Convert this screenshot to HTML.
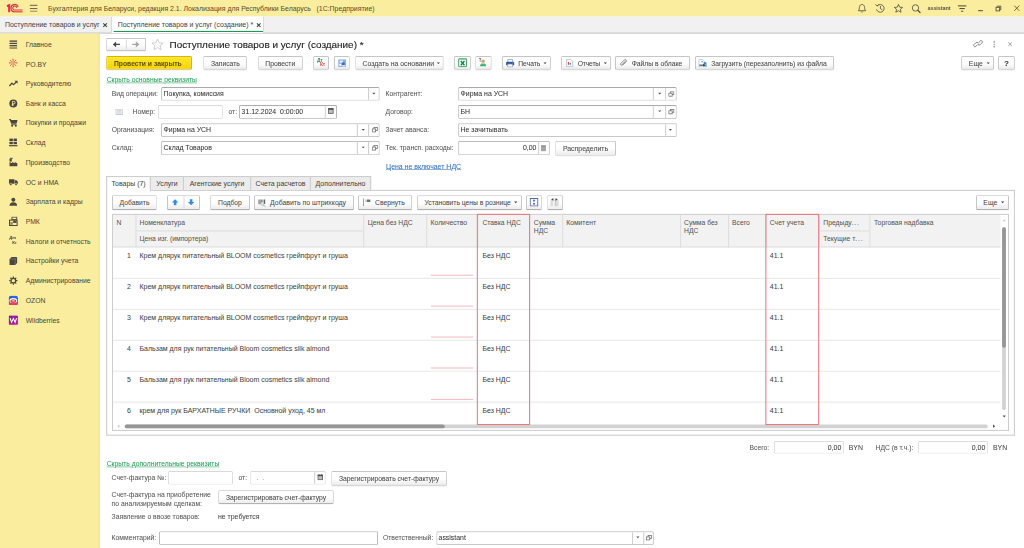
<!DOCTYPE html>
<html><head><meta charset="utf-8"><title>1C</title><style>
*{box-sizing:border-box;margin:0;padding:0}
html,body{width:1920px;height:1027.5px;overflow:hidden;background:#fff}
body{-webkit-text-stroke:0.07px;font-family:"Liberation Sans",sans-serif;font-size:12.99px;color:#3c3c3c;position:relative;line-height:1}
.a{position:absolute;white-space:pre}
.t{position:absolute;white-space:pre;height:18.75px;line-height:18.75px}
.btn{position:absolute;border:2.01px solid #c6c6c6;border-bottom-color:#b2b2b2;border-radius:2.81px;background:linear-gradient(#ffffff 0%,#fdfdfd 55%,#ececec 100%);box-shadow:0 1.12px 0 rgba(0,0,0,.07);white-space:pre;color:#484848;-webkit-text-stroke:0.09px;font-size:12.66px}
.btn span{position:absolute;top:50%;margin-top:-8.25px;height:18.75px;line-height:18.75px}
.fld{position:absolute;border:2.01px solid #9a9a9a;border-color:#a9a9a9 #b9b9b9 #c8c8c8 #b9b9b9;border-radius:2.81px;background:#fff;white-space:pre}
.fld.dim{border-color:#d9d9d9 #dfdfdf #e4e4e4 #dfdfdf}
.fld span{position:absolute;top:50%;margin-top:-9.56px;height:18.75px;line-height:18.75px;color:#333}
.vd{position:absolute;top:0;bottom:0;width:2.01px;background:#d0d0d0}
.lnk{position:absolute;white-space:pre;text-decoration:underline;height:18.75px;line-height:18.75px;font-size:12.71px}
.dd{position:absolute;width:0;height:0;border-left:3.19px solid transparent;border-right:3.19px solid transparent;border-top:3.56px solid #3c3c3c}
html,body{width:1024px !important;height:548px !important}#root{position:absolute;left:0;top:0;width:1920px;height:1028px;transform:scale(0.533333);transform-origin:0 0;overflow:hidden}</style></head><body><div id="root">
<div class="a" style="left:0;top:0;width:1920px;height:30.75px;background:#fbed9e"></div>
<div class="t" style="left:90px;top:7.5px;color:#5a4f2e;">Бухгалтерия для Беларуси, редакция 2.1. Локализация для Республики Беларусь   (1С:Предприятие)</div>
<div class="a" style="left:0;top:30.75px;width:1920px;height:31.88px;background:#f1f1f1;border-bottom:2.01px solid #c8c8c8"></div>
<div class="a" style="left:208.12px;top:30.75px;width:286.88px;height:30.75px;background:#fff;border-left:2.01px solid #dadada;border-right:2.01px solid #dadada"></div>
<div class="a" style="left:212.62px;top:58.12px;width:280.31px;height:2.25px;background:#1a9a50"></div>
<div class="t" style="left:9.38px;top:38.06px;color:#46464f;">Поступление товаров и услуг</div>
<div class="t" style="left:220.69px;top:38.06px;color:#46464f;">Поступление товаров и услуг (создание) *</div>
<div class="a" style="left:0;top:62.62px;width:187.12px;height:965.62px;background:#fbed9e;border-right:2.01px solid #f0e296"></div>
<div class="t" style="left:48.19px;top:74.62px;color:#4d4a3c;font-size:12.75px;">Главное</div>
<div class="t" style="left:48.19px;top:111.56px;color:#4d4a3c;font-size:12.75px;">PO.BY</div>
<div class="t" style="left:48.19px;top:148.5px;color:#4d4a3c;font-size:12.75px;">Руководителю</div>
<div class="t" style="left:48.19px;top:185.44px;color:#4d4a3c;font-size:12.75px;">Банк и касса</div>
<div class="t" style="left:48.19px;top:222.38px;color:#4d4a3c;font-size:12.75px;">Покупки и продажи</div>
<div class="t" style="left:48.19px;top:259.31px;color:#4d4a3c;font-size:12.75px;">Склад</div>
<div class="t" style="left:48.19px;top:296.25px;color:#4d4a3c;font-size:12.75px;">Производство</div>
<div class="t" style="left:48.19px;top:333.19px;color:#4d4a3c;font-size:12.75px;">ОС и НМА</div>
<div class="t" style="left:48.19px;top:370.12px;color:#4d4a3c;font-size:12.75px;">Зарплата и кадры</div>
<div class="t" style="left:48.19px;top:407.06px;color:#4d4a3c;font-size:12.75px;">РМК</div>
<div class="t" style="left:48.19px;top:444px;color:#4d4a3c;font-size:12.75px;">Налоги и отчетность</div>
<div class="t" style="left:48.19px;top:480.94px;color:#4d4a3c;font-size:12.75px;">Настройки учета</div>
<div class="t" style="left:48.19px;top:517.88px;color:#4d4a3c;font-size:12.75px;">Администрирование</div>
<div class="t" style="left:48.19px;top:554.81px;color:#4d4a3c;font-size:12.75px;">OZON</div>
<div class="t" style="left:48.19px;top:591.75px;color:#4d4a3c;font-size:12.75px;">Wildberries</div>
<div class="btn" style="left:198.75px;top:71.25px;width:75px;height:24.38px;"></div>
<div class="a" style="left:236.25px;top:74.06px;width:2.01px;height:18.75px;background:#dcdcdc"></div>
<div class="t" style="left:317.81px;top:69.38px;height:30px;line-height:30px;font-size:18.62px;color:#1c1c1c;-webkit-text-stroke:0.22px">Поступление товаров и услуг (создание) *</div>
<div class="btn" style="left:198.75px;top:105px;width:161.25px;height:26.25px;background:linear-gradient(#ffe72e,#f6d300);border-color:#d4b800;border-bottom-color:#c2a600;"><span style="left:12.94px"><b style="color:#5a5000;-webkit-text-stroke:0">Провести и закрыть</b></span></div>
<div class="btn" style="left:380.62px;top:105px;width:82.5px;height:26.25px;"><span style="left:12.94px">Записать</span></div>
<div class="btn" style="left:483.75px;top:105px;width:84.38px;height:26.25px;"><span style="left:11.81px">Провести</span></div>
<div class="btn" style="left:586.88px;top:105px;width:30px;height:26.25px;"></div>
<div class="btn" style="left:626.25px;top:105px;width:30px;height:26.25px;"></div>
<div class="btn" style="left:665.62px;top:105px;width:166.88px;height:26.25px;"><span style="left:12.19px"><i style="font-style:normal;font-size:12.94px">Создать на основании</i></span></div>
<div class="dd" style="left:818.62px;top:117.19px;border-top-color:#3c3c3c"></div>
<div class="btn" style="left:851.25px;top:105px;width:31.88px;height:26.25px;"></div>
<div class="btn" style="left:890.62px;top:105px;width:31.88px;height:26.25px;"></div>
<div class="btn" style="left:941.25px;top:105px;width:91.88px;height:26.25px;"><span style="left:28.5px">Печать</span></div>
<div class="dd" style="left:1019.25px;top:117.19px;border-top-color:#3c3c3c"></div>
<div class="btn" style="left:1051.88px;top:105px;width:93.75px;height:26.25px;"><span style="left:29.25px"><i style="font-style:normal;letter-spacing:-0.3px">Отчеты</i></span></div>
<div class="dd" style="left:1131.56px;top:117.19px;border-top-color:#3c3c3c"></div>
<div class="btn" style="left:1153.12px;top:105px;width:140.62px;height:26.25px;"><span style="left:29.25px">Файлы в облаке</span></div>
<div class="btn" style="left:1303.12px;top:105px;width:260.62px;height:26.25px;"><span style="left:28.31px">Загрузить (перезаполнить) из файла</span></div>
<div class="btn" style="left:1801.88px;top:105px;width:61.88px;height:26.25px;"><span style="left:12.75px"><i style="font-style:normal;font-size:12.94px">Еще</i></span></div>
<div class="dd" style="left:1850.06px;top:117.19px;border-top-color:#3c3c3c"></div>
<div class="btn" style="left:1871.25px;top:105px;width:31.88px;height:26.25px;"><span style="left:0;right:0;text-align:center"><b style="font-size:15px;color:#333">?</b></span></div>
<div class="lnk" style="left:200.06px;top:141px;color:#1f9d55">Скрыть основные реквизиты</div>
<div class="t" style="left:209.44px;top:167.44px;color:#555;font-size:12.71px;">Вид операции:</div>
<div class="fld" style="left:301.88px;top:163.12px;width:410.62px;height:26.25px;"><span style="left:2.81px">Покупка, комиссия</span><i class="vd" style="left:386.12px"></i></div>
<div class="dd" style="left:698.25px;top:173.62px;border-left-width:3px;border-right-width:3px;border-top-width:3.56px;border-top-color:#505050"></div>
<div class="t" style="left:248.44px;top:201.38px;color:#555;font-size:12.71px;">Номер:</div>
<div class="fld dim" style="left:296.25px;top:196.88px;width:121.88px;height:26.25px;"></div>
<div class="t" style="left:428.44px;top:201.38px;color:#555;font-size:12.71px;">от:</div>
<div class="fld" style="left:448.12px;top:196.88px;width:183.75px;height:26.25px;"><span style="left:2.81px">31.12.2024  0:00:00</span><i class="vd" style="left:159.24px"></i></div>
<div class="t" style="left:209.44px;top:235.31px;color:#555;font-size:12.71px;">Организация:</div>
<div class="fld" style="left:301.88px;top:230.62px;width:410.62px;height:26.25px;"><span style="left:2.81px">Фирма на УСН</span><i class="vd" style="left:365.49px"></i><i class="vd" style="left:386.12px"></i></div>
<div class="dd" style="left:678.19px;top:241.5px;border-left-width:3px;border-right-width:3px;border-top-width:3.56px;border-top-color:#505050"></div>
<div class="t" style="left:209.44px;top:269.06px;color:#555;font-size:12.71px;">Склад:</div>
<div class="fld" style="left:301.88px;top:264.38px;width:410.62px;height:26.25px;"><span style="left:2.81px">Склад Товаров</span><i class="vd" style="left:365.49px"></i><i class="vd" style="left:386.12px"></i></div>
<div class="dd" style="left:678.19px;top:275.25px;border-left-width:3px;border-right-width:3px;border-top-width:3.56px;border-top-color:#505050"></div>
<div class="t" style="left:722.81px;top:167.44px;color:#555;font-size:12.71px;">Контрагент:</div>
<div class="fld" style="left:858.75px;top:163.12px;width:410.62px;height:26.25px;"><span style="left:2.81px">Фирма на УСН</span><i class="vd" style="left:363.62px"></i><i class="vd" style="left:386.12px"></i></div>
<div class="dd" style="left:1233.75px;top:173.62px;border-left-width:3px;border-right-width:3px;border-top-width:3.56px;border-top-color:#505050"></div>
<div class="t" style="left:722.81px;top:201.38px;color:#555;font-size:12.71px;">Договор:</div>
<div class="fld" style="left:858.75px;top:196.88px;width:410.62px;height:26.25px;"><span style="left:2.81px">БН</span><i class="vd" style="left:363.62px"></i><i class="vd" style="left:386.12px"></i></div>
<div class="dd" style="left:1233.75px;top:207.38px;border-left-width:3px;border-right-width:3px;border-top-width:3.56px;border-top-color:#505050"></div>
<div class="t" style="left:722.81px;top:235.31px;color:#555;font-size:12.71px;">Зачет аванса:</div>
<div class="fld" style="left:858.75px;top:230.62px;width:410.62px;height:26.25px;"><span style="left:2.81px">Не зачитывать</span><i class="vd" style="left:386.12px"></i></div>
<div class="dd" style="left:1254.38px;top:241.5px;border-left-width:3px;border-right-width:3px;border-top-width:3.56px;border-top-color:#505050"></div>
<div class="t" style="left:722.81px;top:269.06px;color:#555;font-size:12.71px;">Тек. трансп. расходы:</div>
<div class="fld" style="left:858.75px;top:264.38px;width:172.5px;height:26.25px;"><span style="right:23.44px">0,00</span><i class="vd" style="left:147.99px"></i></div>
<div class="btn" style="left:1040.62px;top:264.38px;width:114.38px;height:28.12px;"><span style="left:0;right:0;text-align:center"><i style="font-style:normal;font-size:12.94px">Распределить</i></span></div>
<div class="lnk" style="left:723.75px;top:303px;color:#2e6fc0;font-size:13.03px">Цена не включает НДС</div>
<div class="a" style="left:198.75px;top:356.25px;width:1704.38px;height:460.31px;border:2.01px solid #cdcdcd;background:#fff"></div>
<div class="a" style="left:198.75px;top:330px;width:84.38px;height:28.5px;border:2.01px solid #cdcdcd;border-bottom:none;background:#fff;text-align:center;line-height:23.62px;color:#444">Товары (7)</div>
<div class="a" style="left:281.25px;top:330px;width:63.75px;height:26.25px;border:2.01px solid #cdcdcd;border-bottom:none;background:#ececec;text-align:center;line-height:23.62px;color:#444">Услуги</div>
<div class="a" style="left:343.12px;top:330px;width:127.5px;height:26.25px;border:2.01px solid #cdcdcd;border-bottom:none;background:#ececec;text-align:center;line-height:23.62px;color:#444">Агентские услуги</div>
<div class="a" style="left:468.75px;top:330px;width:114.38px;height:26.25px;border:2.01px solid #cdcdcd;border-bottom:none;background:#ececec;text-align:center;line-height:23.62px;color:#444">Счета расчетов</div>
<div class="a" style="left:581.25px;top:330px;width:114.38px;height:26.25px;border:2.01px solid #cdcdcd;border-bottom:none;background:#ececec;text-align:center;line-height:23.62px;color:#444">Дополнительно</div>
<div class="btn" style="left:210px;top:365.62px;width:84.38px;height:28.12px;"><span style="left:0;right:0;text-align:center">Добавить</span></div>
<div class="btn" style="left:313.12px;top:365.62px;width:61.88px;height:28.12px;"></div>
<div class="a" style="left:343.69px;top:368.06px;width:2.01px;height:22.5px;background:#dcdcdc"></div>
<div class="btn" style="left:393.75px;top:365.62px;width:75px;height:28.12px;"><span style="left:0;right:0;text-align:center">Подбор</span></div>
<div class="btn" style="left:476.25px;top:365.62px;width:187.5px;height:28.12px;"><span style="left:28.12px"><i style="font-style:normal;font-size:12.94px">Добавить по штрихкоду</i></span></div>
<div class="btn" style="left:671.25px;top:365.62px;width:101.25px;height:28.12px;"><span style="left:30px">Свернуть</span></div>
<div class="btn" style="left:781.88px;top:365.62px;width:196.88px;height:28.12px;"><span style="left:12px">Установить цены в рознице</span></div>
<div class="dd" style="left:963.94px;top:377.62px;border-top-color:#3c3c3c"></div>
<div class="btn" style="left:986.25px;top:365.62px;width:30px;height:28.12px;"></div>
<div class="btn" style="left:1025.62px;top:365.62px;width:30px;height:28.12px;"></div>
<div class="btn" style="left:1830px;top:365.62px;width:61.88px;height:28.12px;"><span style="left:11.81px"><i style="font-style:normal;font-size:12.94px">Еще</i></span></div>
<div class="dd" style="left:1877.44px;top:377.62px;border-top-color:#3c3c3c"></div>
<div class="a" style="left:210px;top:401.25px;width:1681.88px;height:406.88px;border:2.01px solid #cdcdcd;background:#fff"></div>
<div class="a" style="left:211.88px;top:403.12px;width:1664.06px;height:60.56px;background:#f2f2f2;border-bottom:2.01px solid #dedede"></div>
<div class="a" style="left:253.5px;top:403.12px;width:2.01px;height:60.56px;background:#dedede"></div>
<div class="a" style="left:681px;top:403.12px;width:2.01px;height:60.56px;background:#dedede"></div>
<div class="a" style="left:799.12px;top:403.12px;width:2.01px;height:60.56px;background:#dedede"></div>
<div class="a" style="left:894.75px;top:403.12px;width:2.01px;height:60.56px;background:#dedede"></div>
<div class="a" style="left:992.25px;top:403.12px;width:2.01px;height:60.56px;background:#dedede"></div>
<div class="a" style="left:1054.12px;top:403.12px;width:2.01px;height:60.56px;background:#dedede"></div>
<div class="a" style="left:1275px;top:403.12px;width:2.01px;height:60.56px;background:#dedede"></div>
<div class="a" style="left:1365px;top:403.12px;width:2.01px;height:60.56px;background:#dedede"></div>
<div class="a" style="left:1435.5px;top:403.12px;width:2.01px;height:60.56px;background:#dedede"></div>
<div class="a" style="left:1535.25px;top:403.12px;width:2.01px;height:60.56px;background:#dedede"></div>
<div class="a" style="left:1630.31px;top:403.12px;width:2.01px;height:60.56px;background:#dedede"></div>
<div class="a" style="left:253.5px;top:431.81px;width:427.5px;height:2.01px;background:#dedede"></div>
<div class="a" style="left:1535.25px;top:431.81px;width:95.06px;height:2.01px;background:#dedede"></div>
<div class="t" style="left:218.62px;top:408.75px;color:#555;font-size:12.71px;">N</div>
<div class="t" style="left:261.56px;top:408.75px;color:#555;font-size:12.71px;">Номенклатура</div>
<div class="t" style="left:261.56px;top:439.12px;color:#555;font-size:12.71px;">Цена изг. (импортера)</div>
<div class="t" style="left:689.44px;top:408.75px;color:#555;font-size:12.71px;">Цена без НДС</div>
<div class="t" style="left:807.38px;top:408.75px;color:#555;font-size:12.71px;">Количество</div>
<div class="t" style="left:904.5px;top:408.75px;color:#555;font-size:12.71px;">Ставка НДС</div>
<div class="t" style="left:1000.87px;top:408.75px;color:#555;font-size:12.71px;">Сумма</div>
<div class="t" style="left:1000.87px;top:423.38px;color:#555;font-size:12.71px;">НДС</div>
<div class="t" style="left:1061.62px;top:408.75px;color:#555;font-size:12.71px;">Комитент</div>
<div class="t" style="left:1282.5px;top:408.75px;color:#555;font-size:12.71px;">Сумма без</div>
<div class="t" style="left:1282.5px;top:423.38px;color:#555;font-size:12.71px;">НДС</div>
<div class="t" style="left:1372.5px;top:408.75px;color:#555;font-size:12.71px;">Всего</div>
<div class="t" style="left:1443.38px;top:408.75px;color:#555;font-size:12.71px;">Счет учета</div>
<div class="t" style="left:1543.69px;top:408.75px;color:#555;font-size:12.71px;">Предыду<span style="letter-spacing:1.41px">...</span></div>
<div class="t" style="left:1543.69px;top:439.12px;color:#555;font-size:12.71px;">Текущие т<span style="letter-spacing:1.41px">...</span></div>
<div class="t" style="left:1638.75px;top:408.75px;color:#555;font-size:12.71px;">Торговая надбавка</div>
<div class="t" style="left:212.81px;width:32.81px;text-align:right;top:471px;color:#444">1</div>
<div class="t" style="left:261.56px;top:470.62px;color:#444;font-size:13.12px;">Крем длярук питательный BLOOM cosmetics грейпфрут и груша</div>
<div class="t" style="left:904.5px;top:470.62px;color:#404040;">Без НДС</div>
<div class="t" style="left:1443.38px;top:470.62px;color:#404040;">41.1</div>
<div class="a" style="left:211.88px;top:520.88px;width:1664.06px;height:2.01px;background:#e9e9e9"></div>
<div class="a" style="left:808.12px;top:515.06px;width:78.75px;height:0;border-top:2.01px solid #f7bcc0"></div>
<div class="t" style="left:212.81px;width:32.81px;text-align:right;top:529.12px;color:#444">2</div>
<div class="t" style="left:261.56px;top:528.75px;color:#444;font-size:13.12px;">Крем длярук питательный BLOOM cosmetics грейпфрут и груша</div>
<div class="t" style="left:904.5px;top:528.75px;color:#404040;">Без НДС</div>
<div class="t" style="left:1443.38px;top:528.75px;color:#404040;">41.1</div>
<div class="a" style="left:211.88px;top:579px;width:1664.06px;height:2.01px;background:#e9e9e9"></div>
<div class="a" style="left:808.12px;top:573.19px;width:78.75px;height:0;border-top:2.01px solid #f7bcc0"></div>
<div class="t" style="left:212.81px;width:32.81px;text-align:right;top:587.25px;color:#444">3</div>
<div class="t" style="left:261.56px;top:586.88px;color:#444;font-size:13.12px;">Крем длярук питательный BLOOM cosmetics грейпфрут и груша</div>
<div class="t" style="left:904.5px;top:586.88px;color:#404040;">Без НДС</div>
<div class="t" style="left:1443.38px;top:586.88px;color:#404040;">41.1</div>
<div class="a" style="left:211.88px;top:637.12px;width:1664.06px;height:2.01px;background:#e9e9e9"></div>
<div class="a" style="left:808.12px;top:631.31px;width:78.75px;height:0;border-top:2.01px solid #f7bcc0"></div>
<div class="t" style="left:212.81px;width:32.81px;text-align:right;top:645.38px;color:#444">4</div>
<div class="t" style="left:261.56px;top:645px;color:#444;font-size:13.12px;">Бальзам для рук питательный Bloom cosmetics silk almond</div>
<div class="t" style="left:904.5px;top:645px;color:#404040;">Без НДС</div>
<div class="t" style="left:1443.38px;top:645px;color:#404040;">41.1</div>
<div class="a" style="left:211.88px;top:695.25px;width:1664.06px;height:2.01px;background:#e9e9e9"></div>
<div class="a" style="left:808.12px;top:689.44px;width:78.75px;height:0;border-top:2.01px solid #f7bcc0"></div>
<div class="t" style="left:212.81px;width:32.81px;text-align:right;top:703.5px;color:#444">5</div>
<div class="t" style="left:261.56px;top:703.12px;color:#444;font-size:13.12px;">Бальзам для рук питательный Bloom cosmetics silk almond</div>
<div class="t" style="left:904.5px;top:703.12px;color:#404040;">Без НДС</div>
<div class="t" style="left:1443.38px;top:703.12px;color:#404040;">41.1</div>
<div class="a" style="left:211.88px;top:753.38px;width:1664.06px;height:2.01px;background:#e9e9e9"></div>
<div class="a" style="left:808.12px;top:747.56px;width:78.75px;height:0;border-top:2.01px solid #f7bcc0"></div>
<div class="t" style="left:212.81px;width:32.81px;text-align:right;top:761.62px;color:#444">6</div>
<div class="t" style="left:261.56px;top:761.25px;color:#444;font-size:13.12px;">крем для рук БАРХАТНЫЕ РУЧКИ  Основной уход, 45 мл</div>
<div class="t" style="left:904.5px;top:761.25px;color:#404040;">Без НДС</div>
<div class="t" style="left:1443.38px;top:761.25px;color:#404040;">41.1</div>
<div class="a" style="left:1879.12px;top:425.62px;width:6.75px;height:343.12px;background:#d2d2d2;border-radius:3.38px"></div>
<div class="a" style="left:1879.12px;top:425.62px;width:6.75px;height:226.88px;background:#969696;border-radius:3.38px"></div>
<div class="a" style="left:234.38px;top:795.75px;width:1618.12px;height:7.12px;background:#d2d2d2;border-radius:3.56px"></div>
<div class="a" style="left:234.38px;top:795.75px;width:600px;height:7.12px;background:#969696;border-radius:3.56px"></div>
<div class="a" style="left:1879.5px;top:411.19px;width:0;height:0;border-left:3.19px solid transparent;border-right:3.19px solid transparent;border-bottom:4.12px solid #c4c4c4"></div>
<div class="a" style="left:1879.5px;top:779.06px;width:0;height:0;border-left:3.19px solid transparent;border-right:3.19px solid transparent;border-top:4.12px solid #4a4a4a"></div>
<div class="a" style="left:219.75px;top:796.12px;width:0;height:0;border-top:3.19px solid transparent;border-bottom:3.19px solid transparent;border-right:4.12px solid #c4c4c4"></div>
<div class="a" style="left:1862.44px;top:796.12px;width:0;height:0;border-top:3.19px solid transparent;border-bottom:3.19px solid transparent;border-left:4.12px solid #4a4a4a"></div>
<div class="a" style="left:894.38px;top:401.25px;width:99.38px;height:395.62px;border:2.01px solid #ea7a82"></div>
<div class="a" style="left:1434.75px;top:401.25px;width:101.25px;height:395.62px;border:2.01px solid #ea7a82"></div>
<div class="t" style="left:1405.31px;top:830.25px;color:#555;font-size:12.71px;">Всего:</div>
<div class="fld dim" style="left:1451.25px;top:826.88px;width:131.25px;height:24.38px;"><span style="right:3.19px">0,00</span></div>
<div class="t" style="left:1591.31px;top:830.25px;color:#444;">BYN</div>
<div class="t" style="left:1641.56px;top:830.25px;color:#555;font-size:12.71px;">НДС (в т.ч.):</div>
<div class="fld dim" style="left:1721.25px;top:826.88px;width:131.25px;height:24.38px;"><span style="right:3.19px">0,00</span></div>
<div class="t" style="left:1861.88px;top:830.25px;color:#444;">BYN</div>
<div class="lnk" style="left:200.06px;top:860.62px;color:#1f9d55">Скрыть дополнительные реквизиты</div>
<div class="t" style="left:209.25px;top:886.88px;color:#555;font-size:12.71px;">Счет-фактура №:</div>
<div class="fld dim" style="left:315px;top:883.12px;width:121.88px;height:26.25px;"></div>
<div class="t" style="left:447.19px;top:886.88px;color:#555;font-size:12.71px;">от:</div>
<div class="fld dim" style="left:468.75px;top:883.12px;width:142.5px;height:26.25px;"><span style="left:2.81px"><span style="color:#888;position:static">  .  .</span></span><i class="vd" style="left:117.99px"></i></div>
<div class="btn" style="left:620.62px;top:883.12px;width:217.5px;height:28.12px;"><span style="left:0;right:0;text-align:center">Зарегистрировать счет-фактуру</span></div>
<div class="t" style="left:209.25px;top:918.75px;color:#555;font-size:12.71px;">Счет-фактура на приобретение</div>
<div class="t" style="left:209.25px;top:934.5px;color:#555;font-size:12.71px;">по анализируемым сделкам:</div>
<div class="btn" style="left:408.75px;top:918.75px;width:217.5px;height:26.25px;"><span style="left:0;right:0;text-align:center">Зарегистрировать счет-фактуру</span></div>
<div class="t" style="left:209.25px;top:960.75px;color:#555;font-size:12.71px;">Заявление о ввозе товаров:</div>
<div class="t" style="left:408.75px;top:960.75px;color:#444;">не требуется</div>
<div class="t" style="left:209.25px;top:999.75px;color:#555;font-size:12.71px;">Комментарий:</div>
<div class="fld" style="left:298.12px;top:995.62px;width:410.62px;height:26.25px;"></div>
<div class="t" style="left:718.12px;top:999.75px;color:#555;font-size:12.71px;">Ответственный:</div>
<div class="fld" style="left:817.5px;top:995.62px;width:408.75px;height:26.25px;"><span style="left:2.81px">assistant</span><i class="vd" style="left:365.49px"></i><i class="vd" style="left:386.12px"></i></div>
<div class="dd" style="left:1193.25px;top:1005.94px;border-left-width:3px;border-right-width:3px;border-top-width:3.56px;border-top-color:#505050"></div>
<svg class="a" style="left:11.25px;top:5.62px" width="33.75" height="18.75" viewBox="0 0 18 10">
<g fill="none" stroke="#dc3545" stroke-linecap="butt">
<path d="M1.1 3 L3.3 2 L3.3 9" stroke-width="2.1" stroke-linejoin="miter"/>
<path d="M12.3 3.6 A3.7 3.7 0 1 0 9.2 8.6 L16.7 8.6" stroke-width="1.25"/>
<path d="M10.9 4.6 A2 2 0 1 0 9.2 6.8 L16.7 6.8" stroke-width="1.15"/>
</g></svg>
<div class="a" style="left:56.25px;top:9.38px;width:13.88px;height:2.01px;background:#73684a"></div>
<div class="a" style="left:56.25px;top:15px;width:13.88px;height:2.01px;background:#73684a"></div>
<div class="a" style="left:56.25px;top:19.88px;width:13.88px;height:2.25px;background:#9a8f63"></div>
<svg class="a" style="left:1605px;top:3.75px" width="22.50" height="24.38" viewBox="0 0 12 13"><g fill="none" stroke="#585240" stroke-width="0.85" stroke-linejoin="round"><path d="M2.3 8.6 C3.6 7.6 3.2 5.8 3.5 4.6 C3.9 3 5 2.3 6 2.3 C7 2.3 8.1 3 8.5 4.6 C8.8 5.8 8.4 7.6 9.7 8.6 Z"/><path d="M5.2 9.6 A0.9 0.9 0 0 0 6.8 9.6"/></g></svg>
<svg class="a" style="left:1638.75px;top:3.75px" width="24.38" height="24.38" viewBox="0 0 13 13"><g fill="none" stroke="#585240" stroke-width="0.85" stroke-linecap="round"><path d="M3.2 3.6 A3.9 3.9 0 1 1 2.4 7.6"/><path d="M6.3 4.3 L6.3 6.5 L7.9 7.5"/><path d="M1.6 2.6 L3.1 3.9 L4.4 2.5" stroke-linejoin="round"/></g></svg>
<svg class="a" style="left:1672.5px;top:3.75px" width="24.38" height="24.38" viewBox="0 0 13 13"><path d="M6.2 2.3 L7.4 5 L10.3 5.3 L8.1 7.2 L8.8 10.1 L6.2 8.6 L3.6 10.1 L4.3 7.2 L2.1 5.3 L5 5 Z" fill="none" stroke="#585240" stroke-width="0.85" stroke-linejoin="round"/></svg>
<svg class="a" style="left:1706.25px;top:3.75px" width="24.38" height="24.38" viewBox="0 0 13 13"><g fill="none" stroke="#585240"><circle cx="5.6" cy="5.8" r="3.2" stroke-width="0.85"/><path d="M7.9 8.2 L10.2 10.4" stroke-width="1.3" stroke-linecap="round"/></g></svg>
<div class="t" style="left:1739.06px;top:6.19px;font-size:10.31px;font-weight:bold;color:#5a5442;letter-spacing:-0.19px;-webkit-text-stroke:0">assistant</div>
<div class="a" style="left:1796.25px;top:10.12px;width:15.56px;height:2.01px;background:#585240"></div>
<div class="a" style="left:1799.25px;top:15.37px;width:9.56px;height:2.01px;background:#585240"></div>
<div class="a" style="left:1802.25px;top:20.25px;width:3.56px;height:2.06px;background:#585240"></div>
<div class="a" style="left:1833.75px;top:18.75px;width:9.38px;height:2.01px;background:#585240"></div>
<svg class="a" style="left:1863.75px;top:7.5px" width="16.88" height="16.88" viewBox="0 0 9 9"><g fill="none" stroke="#585240" stroke-width="0.9"><rect x="1.9" y="3" width="3.6" height="3.6"/><path d="M3.2 3 L3.2 1.9 L6.7 1.9 L6.7 5.4 L5.5 5.4"/></g></svg>
<svg class="a" style="left:1897.5px;top:5.62px" width="16.88" height="18.75" viewBox="0 0 9 10"><path d="M2 2.4 L7 7.6 M7 2.4 L2 7.6" stroke="#585240" stroke-width="0.85" fill="none"/></svg>
<svg class="a" style="left:191.81px;top:41.81px" width="11.25" height="11.25" viewBox="0 0 6 6"><path d="M0.9 0.9 L4.5 4.5 M4.5 0.9 L0.9 4.5" stroke="#404040" stroke-width="1.05" fill="none"/></svg>
<svg class="a" style="left:479.62px;top:41.81px" width="11.25" height="11.25" viewBox="0 0 6 6"><path d="M0.9 0.9 L4.5 4.5 M4.5 0.9 L0.9 4.5" stroke="#404040" stroke-width="1.05" fill="none"/></svg>
<svg class="a" style="left:208.12px;top:75px" width="22.50" height="16.88" viewBox="0 0 12 9"><path d="M9 4.4 L3 4.4" stroke="#454545" stroke-width="1.3" fill="none"/><path d="M1.9 4.4 L5.2 1.5 L5.2 7.3 Z" fill="#454545"/></svg>
<svg class="a" style="left:243.75px;top:75px" width="22.50" height="16.88" viewBox="0 0 12 9"><path d="M2 4.4 L8.4 4.4" stroke="#a6a6a6" stroke-width="1.3" fill="none"/><path d="M9.2 4.4 L5.7 1.3 L5.7 7.5 Z" fill="#a6a6a6"/></svg>
<svg class="a" style="left:283.12px;top:71.25px" width="26.25" height="24.38" viewBox="0 0 14 13"><path d="M6.6 1.2 L8.2 4.9 L12.2 5.3 L9.2 7.9 L10.1 11.8 L6.6 9.7 L3.1 11.8 L4 7.9 L1 5.3 L5 4.9 Z" fill="#fff" stroke="#c4c4c4" stroke-width="0.8" stroke-linejoin="round"/></svg>
<svg class="a" style="left:1824.38px;top:73.12px" width="20.62" height="18.75" viewBox="0 0 11 10"><g fill="none" stroke="#7c7c7c" stroke-width="0.95" stroke-linecap="round"><path d="M4.6 5.9 L2.9 7.6 A1.3 1.3 0 0 1 1.1 5.8 L3.2 3.7 A1.3 1.3 0 0 1 5.1 3.8"/><path d="M5.9 3.6 L7.6 1.9 A1.3 1.3 0 0 1 9.4 3.7 L7.3 5.8 A1.3 1.3 0 0 1 5.4 5.7"/></g></svg>
<div class="a" style="left:1862.81px;top:77.25px;width:2.25px;height:2.25px;background:#777"></div>
<div class="a" style="left:1862.81px;top:81.75px;width:2.25px;height:2.25px;background:#777"></div>
<div class="a" style="left:1862.81px;top:86.25px;width:2.25px;height:2.25px;background:#777"></div>
<svg class="a" style="left:1888.12px;top:76.88px" width="13.12" height="13.12" viewBox="0 0 7 7"><path d="M1.3 1.3 L5 5 M5 1.3 L1.3 5" stroke="#8a8a8a" stroke-width="0.8" fill="none"/></svg>
<div class="a" style="left:594.38px;top:109.69px;font-size:9.38px;font-weight:bold;color:#2e9e5b;letter-spacing:-0.38px;line-height:9.38px">Дт</div>
<div class="a" style="left:600px;top:117.38px;font-size:9.38px;font-weight:bold;color:#e8505b;letter-spacing:-0.38px;line-height:9.38px">Кт</div>
<svg class="a" style="left:633.75px;top:110.62px" width="15.00" height="15.00" viewBox="0 0 8 8"><rect x="0" y="0" width="8" height="7.8" fill="#8fb0e3"/><rect x="1.6" y="1.4" width="3.2" height="2.2" fill="#e9f0fb"/><rect x="3.6" y="3.2" width="3" height="2.6" fill="#3f6fc4"/><rect x="1.2" y="4.6" width="2" height="2.2" fill="#fff"/><rect x="4.2" y="6" width="3" height="1.2" fill="#e9f0fb"/></svg>
<svg class="a" style="left:858.75px;top:108.75px" width="16.88" height="17.25" viewBox="0 0 9 9.2"><rect x="0.5" y="0.6" width="8" height="8" rx="0.6" fill="#f3fbf5" stroke="#2f9e5b" stroke-width="1"/><rect x="0" y="0.2" width="9" height="1.2" fill="#5cb77e"/><path d="M2.7 2.9 L6.3 7.1 M6.3 2.9 L2.7 7.1" stroke="#1f7d44" stroke-width="1.3"/></svg>
<svg class="a" style="left:896.25px;top:107.81px" width="18.75" height="18.75" viewBox="0 0 10 10"><circle cx="5.2" cy="3.6" r="1.7" fill="#d9a56c"/><path d="M3.4 3 Q5.2 0.8 7 3 L6.8 2.4 Q5.2 1.2 3.6 2.4 Z" fill="#6b4a2a"/><path d="M2.2 8.6 Q2.2 5.6 5.2 5.6 Q8.2 5.6 8.2 8.6 Z" fill="#3bb273"/><path d="M4.5 5.7 L5.2 7.2 L5.9 5.7 Z" fill="#fff"/><path d="M1.2 1.6 Q1.2 0.6 2.1 0.6 Q3 0.6 3 1.4 Q3 2 2.2 2.4 L2.2 3" stroke="#444" stroke-width="0.7" fill="none"/><rect x="1.9" y="3.6" width="0.7" height="0.7" fill="#444"/></svg>
<svg class="a" style="left:947.81px;top:109.69px" width="17.81" height="16.88" viewBox="0 0 9.5 9"><rect x="2.3" y="0.7" width="4.4" height="3" fill="#fff" stroke="#6f8fc7" stroke-width="0.6"/><rect x="0.5" y="3.2" width="8.1" height="3.5" rx="0.9" fill="#35589c"/><rect x="2.2" y="5.4" width="4.7" height="2.9" fill="#fff" stroke="#6f8fc7" stroke-width="0.6"/><rect x="6.7" y="3.9" width="0.9" height="0.7" fill="#a9c4ee"/></svg>
<svg class="a" style="left:1061.25px;top:109.69px" width="15.00" height="16.88" viewBox="0 0 8 9"><path d="M0.8 0.7 L5 0.7 L6.8 2.5 L6.8 8 L0.8 8 Z" fill="#fff" stroke="#9bb7e0" stroke-width="0.7"/><rect x="2" y="3.3" width="1.2" height="2.8" fill="#e8404a"/><rect x="3.8" y="4.2" width="1.2" height="1.9" fill="#2e9e5b"/></svg>
<svg class="a" style="left:1160.62px;top:110.25px" width="16.88" height="15.00" viewBox="0 0 9 8"><g fill="none" stroke="#8c8c8c" stroke-width="0.95" stroke-linecap="round"><path d="M3.6 6.4 L6.9 3.1 A1.25 1.25 0 0 0 5.1 1.3 L1.5 4.9 A0.9 0.9 0 0 0 2.8 6.2 L5.8 3.2"/></g><path d="M2.2 5.6 L6.2 1.8 L7.2 2.8 L3.4 6.8 Z" fill="#9a9a9a" opacity="0.55"/></svg>
<svg class="a" style="left:1308.75px;top:109.69px" width="18.75" height="16.88" viewBox="0 0 10 9"><path d="M0.8 0.7 L4.6 0.7 L6.2 2.3 L6.2 8 L0.8 8 Z" fill="#fff" stroke="#a9bfe2" stroke-width="0.7"/><rect x="3.3" y="2.4" width="1.5" height="1.3" fill="#56a3e6"/><rect x="5.6" y="3.6" width="2.6" height="2.2" fill="#3f7fd0"/><rect x="6.4" y="5.6" width="2.2" height="2.6" fill="#6aaef0"/><path d="M1.2 6.5 L5.6 6.5" stroke="#222" stroke-width="0.95"/><path d="M5.2 5.2 L7.1 6.5 L5.2 7.8 Z" fill="#222"/></svg>
<svg class="a" style="left:216.38px;top:203.62px" width="15.00" height="12.00" viewBox="0 0 8 6.4"><rect x="0.5" y="0.5" width="6.8" height="5.2" fill="#f3f4f7" stroke="#c6c9d0" stroke-width="0.7"/><path d="M1.6 1.8 L6.2 1.8 M1.6 3 L6.2 3 M1.6 4.2 L6.2 4.2" stroke="#c2c6ce" stroke-width="0.6"/><path d="M0.6 5.6 H7.2" stroke="#a9bfe0" stroke-width="0.5"/></svg>
<svg class="a" style="left:615px;top:202.31px" width="11.25" height="12.00" viewBox="0 0 6 6.4"><rect x="0.6" y="1" width="4.6" height="4.6" fill="#bdbdbd" stroke="#585858" stroke-width="0.8"/><rect x="0.2" y="0.6" width="5.4" height="1.4" fill="#4a4a4a"/><rect x="1.3" y="0" width="0.8" height="1.2" fill="#4a4a4a"/><rect x="3.7" y="0" width="0.8" height="1.2" fill="#4a4a4a"/></svg>
<svg class="a" style="left:594.75px;top:888.75px" width="11.25" height="12.00" viewBox="0 0 6 6.4"><rect x="0.6" y="1" width="4.6" height="4.6" fill="#bdbdbd" stroke="#585858" stroke-width="0.8"/><rect x="0.2" y="0.6" width="5.4" height="1.4" fill="#4a4a4a"/><rect x="1.3" y="0" width="0.8" height="1.2" fill="#4a4a4a"/><rect x="3.7" y="0" width="0.8" height="1.2" fill="#4a4a4a"/></svg>
<svg class="a" style="left:696.56px;top:238.12px" width="12.00" height="11.25" viewBox="0 0 6.4 6"><g fill="#fff" stroke="#707070" stroke-width="0.8"><rect x="2.2" y="0.5" width="3.4" height="3"/><rect x="0.5" y="2" width="3.4" height="3"/></g></svg>
<svg class="a" style="left:696.56px;top:271.88px" width="12.00" height="11.25" viewBox="0 0 6.4 6"><g fill="#fff" stroke="#707070" stroke-width="0.8"><rect x="2.2" y="0.5" width="3.4" height="3"/><rect x="0.5" y="2" width="3.4" height="3"/></g></svg>
<svg class="a" style="left:1252.5px;top:170.62px" width="12.00" height="11.25" viewBox="0 0 6.4 6"><g fill="#fff" stroke="#707070" stroke-width="0.8"><rect x="2.2" y="0.5" width="3.4" height="3"/><rect x="0.5" y="2" width="3.4" height="3"/></g></svg>
<svg class="a" style="left:1252.5px;top:204.38px" width="12.00" height="11.25" viewBox="0 0 6.4 6"><g fill="#fff" stroke="#707070" stroke-width="0.8"><rect x="2.2" y="0.5" width="3.4" height="3"/><rect x="0.5" y="2" width="3.4" height="3"/></g></svg>
<svg class="a" style="left:1211.25px;top:1003.12px" width="12.00" height="11.25" viewBox="0 0 6.4 6"><g fill="#fff" stroke="#707070" stroke-width="0.8"><rect x="2.2" y="0.5" width="3.4" height="3"/><rect x="0.5" y="2" width="3.4" height="3"/></g></svg>
<svg class="a" style="left:1014.38px;top:271.5px" width="10.12" height="12.00" viewBox="0 0 5.4 6.4"><rect x="0.3" y="0.3" width="4.6" height="5.6" fill="#bdbdbd" stroke="#8a8a8a" stroke-width="0.6"/><rect x="1" y="1" width="3.2" height="1.2" fill="#8a8a8a"/><path d="M1 3.1 H4.2 M1 4.1 H4.2 M1 5 H4.2" stroke="#8f8f8f" stroke-width="0.55"/></svg>
<svg class="a" style="left:322.31px;top:373.31px" width="13.12" height="13.12" viewBox="0 0 7 7"><path d="M3.4 0.2 L6.6 3.5 L4.7 3.5 L4.7 6.4 L2.1 6.4 L2.1 3.5 L0.2 3.5 Z" fill="#2f8fe8"/></svg>
<svg class="a" style="left:351.56px;top:372.94px" width="13.12" height="13.12" viewBox="0 0 7 7"><path d="M3.4 0.2 L6.6 3.5 L4.7 3.5 L4.7 6.4 L2.1 6.4 L2.1 3.5 L0.2 3.5 Z" fill="#2f8fe8" transform="rotate(180 3.4 3.3)"/></svg>
<svg class="a" style="left:483.75px;top:372.75px" width="15.75" height="15.37" viewBox="0 0 8.4 8.2"><g stroke="#5a5a5a" fill="none"><path d="M0.9 0.6 V5.2" stroke-width="1.1"/><path d="M2.5 0.6 V5.2" stroke-width="0.6"/><path d="M3.7 0.6 V3.2" stroke-width="1"/><path d="M5.1 0.6 V3.2" stroke-width="0.6"/><path d="M6.5 0.6 V5" stroke-width="1.1"/></g><circle cx="4.3" cy="4.9" r="1.6" fill="#d7ecfb" stroke="#8aa7c4" stroke-width="0.6"/><path d="M5.4 6.1 L7 7.7" stroke="#d28a4a" stroke-width="0.9"/></svg>
<svg class="a" style="left:678.75px;top:370.5px" width="16.88" height="16.88" viewBox="0 0 9 9"><path d="M1.4 1 V8.3" stroke="#f06a72" stroke-width="0.9"/><rect x="0.9" y="0.4" width="1" height="1.2" fill="#f2a15a"/><rect x="3.3" y="1.7" width="1.3" height="2.4" fill="#bdbdbd"/><rect x="4.8" y="1.7" width="3.4" height="2.4" fill="#6e6e6e"/></svg>
<svg class="a" style="left:993px;top:370.5px" width="16.88" height="16.88" viewBox="0 0 9 9"><rect x="0.6" y="0.6" width="7.6" height="7.6" fill="#fff" stroke="#4a5a9a" stroke-width="0.9"/><path d="M4.4 1.5 V3 M4.4 7.3 V5.8" stroke="#2f6fd0" stroke-width="0.9"/><path d="M2.9 2.5 L4.4 4.1 L5.9 2.5 Z M2.9 6.3 L4.4 4.7 L5.9 6.3 Z" fill="#2f6fd0"/></svg>
<svg class="a" style="left:1031.25px;top:371.25px" width="18.00" height="16.88" viewBox="0 0 9.6 9"><rect x="0.5" y="1.8" width="8.4" height="6.6" rx="1" fill="#dcdcdc"/><rect x="3.1" y="1.8" width="1" height="6.6" fill="#f6f6f6"/><rect x="5.4" y="1.8" width="0.7" height="6.6" fill="#8fb4e6"/><rect x="4.1" y="1.8" width="1.3" height="6.6" fill="#e9e9e9"/><path d="M1.2 1.6 L3.6 0.2 L3.6 3 Z M8 1.6 L5.6 0.2 L5.6 3 Z" fill="#4c4c4c"/></svg>
<svg class="a" style="left:15.94px;top:73.69px" width="18.75" height="18.75" viewBox="0 0 10 10"><g fill="#4a4640"><rect x="1" y="1" width="7.6" height="1.3"/><rect x="1" y="3.3" width="7.6" height="1.3"/><rect x="1" y="5.6" width="7.6" height="1.3"/><rect x="1" y="7.9" width="7.6" height="1.3" opacity="0.75"/></g></svg>
<svg class="a" style="left:15.94px;top:108.75px" width="18.75" height="18.75" viewBox="0 0 10 10"><g stroke="#dd4a3e" stroke-width="0.75" stroke-linecap="round" fill="none"><path d="M4.6 1.2 V3.4 M4.6 6 V8.2 M1.1 4.7 H3.3 M5.9 4.7 H8.1 M2.3 2.4 L3.4 3.5 M5.8 5.9 L6.9 7 M6.9 2.4 L5.8 3.5 M3.4 5.9 L2.3 7"/></g><g fill="#dd4a3e"><circle cx="4.6" cy="4.7" r="0.7"/><circle cx="4.6" cy="0.9" r="0.55"/><circle cx="4.6" cy="8.5" r="0.55"/><circle cx="0.8" cy="4.7" r="0.55"/><circle cx="8.4" cy="4.7" r="0.55"/><circle cx="2" cy="2.1" r="0.5"/><circle cx="7.2" cy="2.1" r="0.5"/><circle cx="2" cy="7.3" r="0.5"/><circle cx="7.2" cy="7.3" r="0.5"/></g></svg>
<svg class="a" style="left:15.94px;top:147.56px" width="18.75" height="18.75" viewBox="0 0 10 10"><path d="M0.8 7 L3.4 4.3 L5 5.7 L8.3 2.6" stroke="#4a4640" stroke-width="1.3" fill="none" stroke-linejoin="round"/><path d="M6 1.9 L9 1.9 L9 4.9 Z" fill="#4a4640"/></svg>
<svg class="a" style="left:15.94px;top:184.5px" width="18.75" height="18.75" viewBox="0 0 10 10"><circle cx="4.8" cy="4.9" r="4" fill="#4a4640"/><path d="M3.9 7.3 V2.7 H5.3 A1.25 1.25 0 0 1 5.3 5.2 H3.9 M3.2 6.3 H5.4" stroke="#fbed9e" stroke-width="0.85" fill="none"/></svg>
<svg class="a" style="left:15.94px;top:221.44px" width="18.75" height="18.75" viewBox="0 0 10 10"><path d="M0.4 1.2 H2 L2.6 2.2 H9 L8 6 H3.2 Z" fill="#4a4640"/><circle cx="3.6" cy="8" r="1" fill="#4a4640"/><circle cx="7.3" cy="8" r="1" fill="#4a4640"/><path d="M2 1.4 L3.3 6.8 H8" stroke="#4a4640" stroke-width="0.8" fill="none"/></svg>
<svg class="a" style="left:15.94px;top:258.38px" width="18.75" height="18.75" viewBox="0 0 10 10"><g fill="#4a4640"><rect x="0.9" y="1" width="3.4" height="2.4"/><rect x="5" y="1" width="3.4" height="2.4"/><rect x="0.9" y="4.2" width="3.4" height="2.4"/><rect x="5" y="4.2" width="3.4" height="2.4"/><rect x="0.5" y="7.5" width="8.4" height="1.2"/></g></svg>
<svg class="a" style="left:15.94px;top:295.31px" width="18.75" height="18.75" viewBox="0 0 10 10"><path d="M1 9 V4.6 L3.6 6 V4.6 L6.2 6 V4.6 L8.8 6 V9 Z" fill="#4a4640"/><rect x="1" y="1.2" width="2.2" height="3" fill="#4a4640"/><rect x="1.6" y="0.4" width="2.6" height="1" fill="#4a4640"/></svg>
<svg class="a" style="left:15.94px;top:332.25px" width="18.75" height="18.75" viewBox="0 0 10 10"><rect x="0.4" y="2.2" width="5.6" height="4.6" rx="0.5" fill="#4a4640"/><path d="M6.3 3.2 H8 L9.4 5 V6.8 H6.3 Z" fill="#4a4640"/><circle cx="2.3" cy="7.3" r="1.15" fill="#4a4640" stroke="#fbed9e" stroke-width="0.5"/><circle cx="7.5" cy="7.3" r="1.15" fill="#4a4640" stroke="#fbed9e" stroke-width="0.5"/></svg>
<svg class="a" style="left:15.94px;top:369.19px" width="18.75" height="18.75" viewBox="0 0 10 10"><circle cx="4.8" cy="3" r="2" fill="#4a4640"/><path d="M1 9 Q1 5.5 4.8 5.5 Q8.6 5.5 8.6 9 Z" fill="#4a4640"/></svg>
<svg class="a" style="left:15.94px;top:406.12px" width="18.75" height="18.75" viewBox="0 0 10 10"><rect x="3.4" y="0.6" width="4.8" height="2.4" fill="none" stroke="#4a4640" stroke-width="0.9"/><rect x="1" y="3.6" width="7.6" height="5.4" fill="none" stroke="#4a4640" stroke-width="1"/><rect x="4.6" y="4.2" width="3.4" height="2" fill="#4a4640"/><rect x="1.8" y="6.6" width="2.4" height="1.6" fill="#4a4640" opacity="0.7"/><path d="M1.4 6 H8" stroke="#4a4640" stroke-width="0.5"/></svg>
<div class="a" style="left:17.44px;top:442.31px;font-size:7.88px;font-weight:bold;color:#4a4640;line-height:8.25px;font-style:italic">Дт</div>
<div class="a" style="left:23.06px;top:450.94px;font-size:7.88px;font-weight:bold;color:#4a4640;line-height:8.25px">Кт</div>
<svg class="a" style="left:15.94px;top:480px" width="18.75" height="18.75" viewBox="0 0 10 10"><path d="M1 3 L3 1 H8.6 V7 L6.6 9 H1 Z" fill="#4a4640"/><path d="M1.4 3 H6.6 V8.6 M6.6 3 L8.4 1.3" stroke="#9c9682" stroke-width="0.5" fill="none"/></svg>
<svg class="a" style="left:15.94px;top:516.94px" width="18.75" height="18.75" viewBox="0 0 10 10"><circle cx="4.8" cy="4.9" r="2.3" fill="none" stroke="#4a4640" stroke-width="1.3"/><g stroke="#4a4640" stroke-width="1.3"><path d="M4.8 0.8 V2.2 M4.8 7.6 V9 M0.7 4.9 H2.1 M7.5 4.9 H8.9 M1.9 2 L2.9 3 M6.7 6.8 L7.7 7.8 M7.7 2 L6.7 3 M2.9 6.8 L1.9 7.8"/></g></svg>
<svg class="a" style="left:15.94px;top:553.88px" width="18.75" height="18.75" viewBox="0 0 10 10"><rect x="0.2" y="0.4" width="9.2" height="9.2" rx="2.4" fill="#2563e8"/><ellipse cx="4.8" cy="5.3" rx="3.9" ry="2.7" fill="#fff"/><ellipse cx="4.8" cy="5.6" rx="3" ry="1.9" fill="#ee3a4a"/><ellipse cx="4.8" cy="5.4" rx="1.6" ry="0.7" fill="#fff" opacity="0.85"/><rect x="0.2" y="7.4" width="9.2" height="2.2" rx="1" fill="#f03a55" opacity="0.9"/></svg>
<svg class="a" style="left:15.94px;top:590.81px" width="18.75" height="18.75" viewBox="0 0 10 10"><defs><linearGradient id="wbg" x1="0" y1="0" x2="1" y2="1"><stop offset="0" stop-color="#7b1fa2"/><stop offset="1" stop-color="#c2189a"/></linearGradient></defs><rect x="0.2" y="0.4" width="9.2" height="9.2" rx="0.8" fill="url(#wbg)"/><path d="M1.6 3 L3 7.2 L4.8 3.4 L6.6 7.2 L8 3" stroke="#fff" stroke-width="1.1" fill="none" stroke-linejoin="miter"/></svg>
